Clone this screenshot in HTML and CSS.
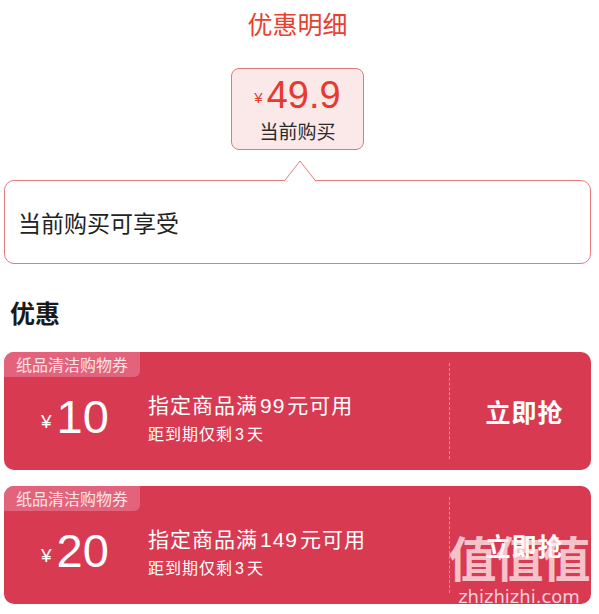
FILE: index.html
```html
<!DOCTYPE html>
<html lang="zh-CN">
<head>
    <meta charset="UTF-8">
    <meta name="viewport" content="width=device-width, initial-scale=1.0">
    <title>优惠明细</title>
    <link rel="stylesheet" href="styles.css">
</head>
<body>

    <div class="page">
        <h1 class="title">优惠明细</h1>

        <div class="price-box">
            <div class="price"><span class="yen">¥</span>49.9</div>
            <div class="price-label">当前购买</div>
        </div>

        <div class="callout">
            <svg class="notch" width="34" height="22" viewBox="0 0 34 22">
                <polyline points="0,21.5 16,1 32,21.5" fill="#fff" stroke="#e57a7f" stroke-width="1"/>
                <rect x="1" y="21" width="30" height="2" fill="#fff"/>
            </svg>
            当前购买可享受
        </div>

        <h2 class="section">优惠</h2>

        <div class="coupon">
            <div class="tag">纸品清洁购物券</div>
            <div class="amount"><span class="yen">¥</span>10</div>
            <div class="info">
                <div class="rule">指定商品满<span class="num">99</span>元可用</div>
                <div class="expire">距到期仅剩<span class="num">3</span>天</div>
            </div>
            <div class="action">立即抢</div>
        </div>

        <div class="coupon">
            <div class="tag">纸品清洁购物券</div>
            <div class="amount"><span class="yen">¥</span>20</div>
            <div class="info">
                <div class="rule">指定商品满<span class="num">149</span>元可用</div>
                <div class="expire">距到期仅剩<span class="num">3</span>天</div>
            </div>
            <div class="action">立即抢</div>
        </div>
    </div>

    <div class="watermark">
        <div class="wm-big">值值值</div>
        <div class="wm-small">zhizhizhi.com</div>
    </div>

</body>
</html>
```

FILE: styles.css
```css
body {
    margin: 0;
    font-family: "Noto Sans CJK SC", "Noto Sans", sans-serif;
    background: #fff;
    color: #222;
    overflow: hidden;
}

.page {
    padding: 0 8px 0 4px;
}

.title {
    margin: 0;
    height: 48px;
    line-height: 46px;
    text-align: center;
    font-size: 25px;
    font-weight: normal;
    color: #e8412f;
}

.price-box {
    width: 131px;
    height: 80px;
    margin: 20px auto 0;
    box-sizing: content-box;
    border: 1px solid #e2787a;
    border-radius: 8px;
    background: #fbe9e9;
    text-align: center;
}

.price {
    font-family: "Liberation Sans", Arial, sans-serif;
    font-size: 38px;
    line-height: 40px;
    margin-top: 6px;
    color: #e53b2e;
}

.price .yen {
    font-size: 15px;
    margin-right: 4px;
    vertical-align: 5px;
}

.price-label {
    font-size: 19px;
    line-height: 26px;
    color: #2a2a2a;
}

.callout {
    position: relative;
    margin-top: 30px;
    height: 82px;
    border: 1px solid #e57a7f;
    border-radius: 10px;
    padding-left: 13px;
    display: flex;
    align-items: center;
    font-size: 23px;
    color: #222;
}

.notch {
    position: absolute;
    top: -21px;
    left: 279px;
}

.section {
    margin: 30px 0 0 6px;
    font-size: 25px;
    line-height: 36px;
    font-weight: bold;
    color: #1a1a1a;
}

.coupon {
    position: relative;
    display: flex;
    align-items: center;
    height: 118px;
    margin-top: 16px;
    border-radius: 10px;
    background: #d83a52;
    color: #fff;
    overflow: hidden;
}

.section + .coupon {
    margin-top: 22px;
}

.tag {
    position: absolute;
    top: 0;
    left: 0;
    width: 136px;
    height: 25px;
    line-height: 24px;
    text-align: center;
    font-size: 16px;
    background: #e2637b;
    color: #fbe3e7;
    border-bottom-right-radius: 6px;
}

.amount {
    width: 144px;
    padding-top: 16px;
    box-sizing: border-box;
    padding-left: 37px;
    font-family: "Liberation Sans", Arial, sans-serif;
    font-size: 47px;
    line-height: 50px;
}

.amount .yen {
    font-size: 19px;
    margin-right: 5px;
    vertical-align: 5px;
}

.info {
    flex: 1;
    padding-top: 14px;
    align-self: stretch;
    display: flex;
    flex-direction: column;
    justify-content: center;
}

.rule {
    font-size: 21px;
    line-height: 31px;
    letter-spacing: 1px;
}

.expire {
    font-size: 16px;
    line-height: 24px;
    letter-spacing: 1px;
}

.num {
    font-family: "Liberation Sans", Arial, sans-serif;
    margin: 0 2px;
}

.action {
    align-self: stretch;
    width: 142px;
    margin: 11px 0;
    padding-left: 8px;
    box-sizing: border-box;
    border-left: 1px dashed rgba(255, 255, 255, 0.45);
    display: flex;
    align-items: center;
    justify-content: center;
    font-size: 25px;
    font-weight: bold;
    letter-spacing: 1px;
}

.watermark {
    position: absolute;
    left: 446px;
    top: 526px;
    width: 146px;
    text-align: center;
    color: rgba(255, 240, 242, 0.75);
    pointer-events: none;
}

.wm-big {
    font-size: 48px;
    line-height: 60px;
    font-weight: bold;
    letter-spacing: -1px;
}

.wm-small {
    font-family: "DejaVu Sans", sans-serif;
    font-size: 18px;
    line-height: 22px;
    color: rgba(245, 220, 225, 0.95);
}
```
